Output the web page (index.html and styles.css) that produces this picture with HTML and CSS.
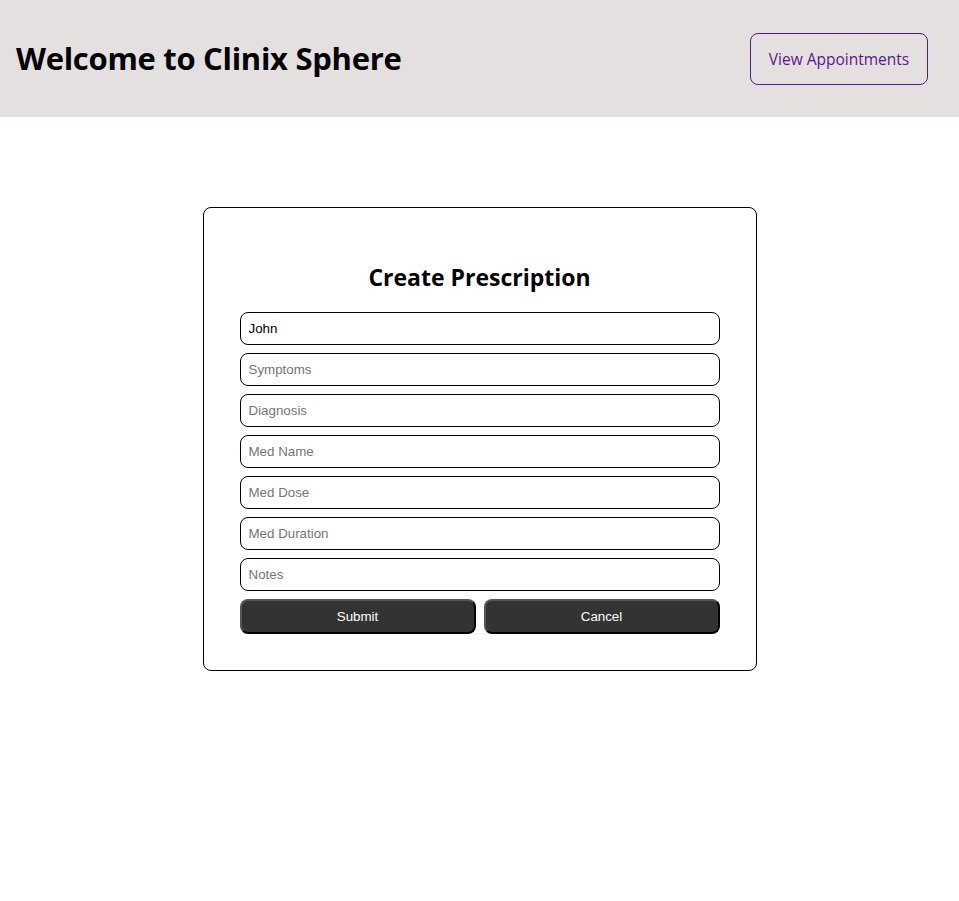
FILE: index.html
```html
<!DOCTYPE html>
<html>
<head>
<meta charset="utf-8">
<link rel="stylesheet" href="styles.css">
</head>
<body>
<header class="topbar">
  <h1 class="brand">Welcome to Clinix Sphere</h1>
  <button class="nav-btn">View Appointments</button>
</header>
<main class="main">
  <form class="card">
    <h2 class="card-title">Create Prescription</h2>
    <input class="field" type="text" value="John">
    <input class="field" type="text" placeholder="Symptoms">
    <input class="field" type="text" placeholder="Diagnosis">
    <input class="field" type="text" placeholder="Med Name">
    <input class="field" type="text" placeholder="Med Dose">
    <input class="field" type="text" placeholder="Med Duration">
    <input class="field" type="text" placeholder="Notes">
    <div class="actions">
      <button type="button" class="act-btn">Submit</button>
      <button type="button" class="act-btn">Cancel</button>
    </div>
  </form>
</main>
</body>
</html>
```
FILE: styles.css
```css
html, body {
  margin: 0;
  padding: 0;
  background: #ffffff;
}
body {
  font-family: "Open Sans", "Noto Sans", sans-serif;
}
.topbar {
  height: 117px;
  box-sizing: border-box;
  background: #e4e0e0;
  display: flex;
  align-items: center;
  justify-content: space-between;
  padding: 0 31px 0 16px;
}
.brand {
  margin: 0 0 2px;
  font-size: 31px;
  font-weight: 700;
  color: #000;
  letter-spacing: -0.3px;
}
.nav-btn {
  font-family: "Open Sans", "Noto Sans", sans-serif;
  font-size: 15.5px;
  color: #5c1591;
  background: transparent;
  border: 1px solid #5c1591;
  border-radius: 8px;
  width: 178px;
  height: 52px;
  padding: 0;
  margin-top: 1px;
}
.main {
  display: flex;
  justify-content: center;
  padding-top: 90px;
}
.card {
  width: 480px;
  padding: 36px;
  border: 1px solid #000;
  border-radius: 8px;
  display: flex;
  flex-direction: column;
  gap: 8px;
}
.card-title {
  font-size: 23px;
  font-weight: 700;
  text-align: center;
  margin: 19px 0 13px;
  line-height: 28px;
}
.field {
  font-family: "Liberation Sans", Arial, sans-serif;
  font-size: 13.33px;
  height: 33px;
  box-sizing: border-box;
  padding: 0 8px;
  border: 1px solid #000;
  border-radius: 8px;
  color: #000;
  margin: 0;
}
.field::placeholder {
  color: #757575;
}
.actions {
  display: flex;
  gap: 8px;
}
.act-btn {
  flex: 1;
  height: 35px;
  font-family: "Liberation Sans", Arial, sans-serif;
  font-size: 13.33px;
  color: #fff;
  background: #333333;
  border-width: 2px;
  border-style: solid;
  border-color: #555555 #000000 #000000 #555555;
  border-radius: 8px;
  padding: 0;
}
```
